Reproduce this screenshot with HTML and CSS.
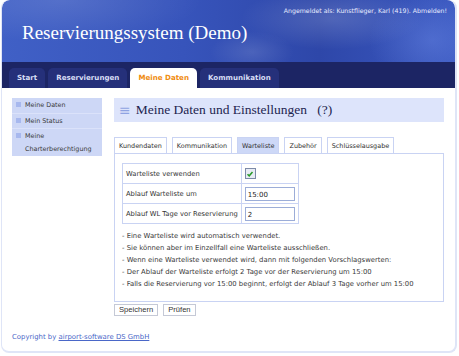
FILE: index.html
```html
<!DOCTYPE html>
<html lang="de">
<head>
<meta charset="utf-8">
<title>Reservierungssystem (Demo)</title>
<link rel="stylesheet" href="styles.css">
</head>
<body>
<div class="page">
  <header class="header">
    <div class="login">Angemeldet als: Kunstflieger, Karl (419). Abmelden!</div>
    <h1 class="title">Reservierungssystem (Demo)</h1>
  </header>
  <nav class="nav">
    <a class="navtab">Start</a>
    <a class="navtab">Reservierungen</a>
    <a class="navtab active">Meine Daten</a>
    <a class="navtab">Kommunikation</a>
  </nav>
  <div class="body">
    <aside class="side">
      <div class="sideitem"><span class="bullet"></span><span>Meine Daten</span></div>
      <div class="sideitem"><span class="bullet"></span><span>Mein Status</span></div>
      <div class="sideitem"><span class="bullet"></span><span>Meine<br>Charterberechtigung</span></div>
    </aside>
    <main class="main">
      <div class="heading"><span class="hicon">≡</span><span>Meine Daten und Einstellungen&nbsp;&nbsp;&nbsp;(?)</span></div>
      <div class="tabs">
        <span class="tab">Kundendaten</span>
        <span class="tab">Kommunikation</span>
        <span class="tab active">Warteliste</span>
        <span class="tab">Zubehör</span>
        <span class="tab">Schlüsselausgabe</span>
      </div>
      <div class="panel">
        <table class="form">
          <tr><td class="lbl">Warteliste verwenden</td><td class="val"><span class="check"><svg width="8" height="8" viewBox="0 0 8 8"><path d="M1.5 4.2 L3.2 5.8 L6.5 2" fill="none" stroke="#2a9a2a" stroke-width="1.5"/></svg></span></td></tr>
          <tr><td class="lbl">Ablauf Warteliste um</td><td class="val"><span class="input">15:00</span></td></tr>
          <tr><td class="lbl">Ablauf WL Tage vor Reservierung</td><td class="val"><span class="input">2</span></td></tr>
        </table>
        <div class="notes">
          <div>- Eine Warteliste wird automatisch verwendet.</div>
          <div>- Sie können aber im Einzellfall eine Warteliste ausschließen.</div>
          <div>- Wenn eine Warteliste verwendet wird, dann mit folgenden Vorschlagswerten:</div>
          <div>- Der Ablauf der Warteliste erfolgt 2 Tage vor der Reservierung um 15:00</div>
          <div>- Falls die Reservierung vor 15:00 beginnt, erfolgt der Ablauf 3 Tage vorher um 15:00</div>
        </div>
      </div>
      <div class="buttons">
        <button class="btn">Speichern</button>
        <button class="btn">Prüfen</button>
      </div>
    </main>
  </div>
  <footer class="footer">Copyright by <a class="flink">airport-software DS GmbH</a></footer>
</div>
</body>
</html>
```
FILE: styles.css
```css
html, body {
  margin: 0;
  padding: 0;
  background: #ffffff;
}
body {
  width: 459px;
  height: 356px;
  overflow: hidden;
  font-family: "DejaVu Sans", Verdana, sans-serif;
  font-size: 6.5px;
  color: #333;
}
.page {
  width: 453px;
  height: 351px;
  margin-left: 1px;
  border: 1px solid #dfe5f7;
  border-width: 0 2px 2px 1px;
  border-radius: 8px;
  background: #fff;
  display: flex;
  flex-direction: column;
  overflow: hidden;
}
.header {
  height: 62px;
  flex: none;
  position: relative;
  border-radius: 8px 8px 0 0;
  background:
    radial-gradient(ellipse 130px 45px at 330px 18px, rgba(255,255,255,0.16), rgba(255,255,255,0) 70%),
    radial-gradient(ellipse 60px 30px at 250px 52px, rgba(255,255,255,0.12), rgba(255,255,255,0) 70%),
    radial-gradient(ellipse 90px 70px at 430px 40px, rgba(120,150,240,0.35), rgba(255,255,255,0) 70%),
    radial-gradient(ellipse 200px 60px at 60px 0px, rgba(255,255,255,0.12), rgba(255,255,255,0) 70%),
    linear-gradient(90deg, #4060c6 0%, #3754bb 40%, #2e47a9 70%, #3a58c0 100%);
  box-sizing: border-box;
  padding: 22px 0 0 20px;
}
.login {
  position: absolute;
  right: 8px;
  top: 7px;
  color: #e8ecff;
  font-size: 6.25px;
}
.title {
  margin: 0;
  font-family: "Liberation Serif", "Times New Roman", serif;
  font-weight: normal;
  font-size: 19px;
  line-height: 22px;
  color: #fff;
}
.nav {
  height: 26px;
  flex: none;
  background: #1c2564;
  display: flex;
  align-items: flex-end;
  gap: 3px;
  padding-left: 7px;
  box-sizing: border-box;
}
.navtab {
  height: 20px;
  line-height: 20px;
  padding: 0 8px;
  background: #25307a;
  border-radius: 5px 5px 0 0;
  color: #d8def5;
  font-weight: bold;
  font-size: 7.1px;
}
.navtab.active {
  background: #fff;
  color: #f08c10;
}
.body {
  display: flex;
  padding: 10px 0 0 10px;
  gap: 12px;
}
.side {
  width: 90px;
  background: #cdd7f6;
  align-self: flex-start;
}
.sideitem {
  display: flex;
  gap: 4px;
  padding: 1px 4px 1px 4px;
  border-bottom: 1px solid #dbe2fa;
  line-height: 12.5px;
  font-size: 6.4px;
  color: #3a3a3a;
}
.sideitem:last-child { border-bottom: none; }
.bullet {
  width: 5px;
  height: 5px;
  background: #a7b8ee;
  margin-top: 3px;
  flex: none;
}
.main {
  width: 330px;
  display: flex;
  flex-direction: column;
}
.heading {
  height: 24px;
  background: #dde4fb;
  display: flex;
  align-items: center;
  padding-left: 5px;
  font-family: "Liberation Serif", "Times New Roman", serif;
  font-size: 13.5px;
  color: #1d2550;
}
.hicon {
  color: #8fa3e2;
  font-family: "DejaVu Sans", sans-serif;
  font-size: 14px;
  margin-right: 5px;
}
.tabs {
  display: flex;
  gap: 5px;
  margin-top: 15px;
}
.tab {
  height: 16px;
  line-height: 16px;
  box-sizing: border-box;
  border: 1px solid #c9d3f3;
  border-bottom: none;
  padding: 0 4px;
  font-size: 6.45px;
  background: #fff;
  color: #333;
}
.tab.active {
  background: #cdd8f7;
}
.panel {
  border: 1px solid #c9d3f3;
  height: 149px;
  box-sizing: border-box;
  padding: 9px 7px;
}
.form {
  border-collapse: collapse;
  border: 1px solid #c9d3f3;
}
.form td {
  border: 1px solid #c9d3f3;
  height: 19px;
  padding: 0 3px;
  font-size: 6.75px;
  color: #333;
}
.form .val {
  width: 50px;
}
.check {
  display: block;
  width: 9px;
  height: 9px;
  border: 1px solid #7d8aa8;
  background: #e8ecf4;
}
.check svg {
  display: block;
  margin: 0.5px;
}
.input {
  display: block;
  height: 14px;
  line-height: 14px;
  box-sizing: border-box;
  border: 1px solid #9cadd8;
  padding-left: 2px;
  font-size: 7px;
  color: #222;
}
.notes {
  margin-top: 6px;
  line-height: 12px;
  font-size: 6.85px;
  color: #3a3a3a;
}
.buttons {
  display: flex;
  gap: 5px;
  margin-top: 2px;
}
.btn {
  height: 12px;
  padding: 0 4px;
  border: 1px solid #c5c9d6;
  background: #fff;
  font-family: "Liberation Sans", Arial, sans-serif;
  font-size: 7.6px;
  color: #333;
  line-height: 10px;
}
.footer {
  margin-top: auto;
  padding: 0 0 8px 10px;
  font-size: 6.9px;
  color: #4a67c8;
  line-height: 12px;
}
.flink {
  text-decoration: underline;
}
```
